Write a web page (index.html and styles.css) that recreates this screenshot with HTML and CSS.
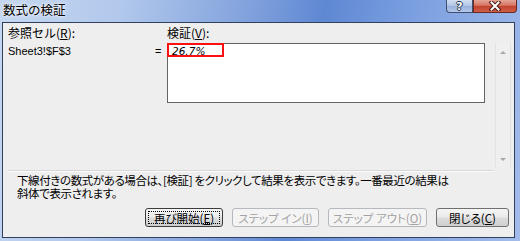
FILE: index.html
```html
<!DOCTYPE html>
<html lang="ja">
<head>
<meta charset="utf-8">
<title>数式の検証</title>
<link rel="stylesheet" href="styles.css">
</head>
<body>
<div class="window">
  <div class="titlebar">
    <div class="title">数式の検証</div>
    <div class="caption-btns">
      <div class="cap help"><span class="q">?</span></div>
      <div class="cap close">
        <svg width="14" height="10" viewBox="0 0 14 10"><path d="M3.5 1.5 L10.5 8.5 M10.5 1.5 L3.5 8.5" stroke="#4a1c14" stroke-width="4" stroke-linecap="square"/><path d="M3.5 1.5 L10.5 8.5 M10.5 1.5 L3.5 8.5" stroke="#ffffff" stroke-width="2" stroke-linecap="square"/></svg>
      </div>
    </div>
  </div>
  <div class="client">
    <div class="eval-grid">
      <div class="lbl ref">参照セル(<u>R</u>):</div>
      <div class="lbl evallbl">検証(<u>V</u>):</div>
      <div class="refval">Sheet3!$F$3</div>
      <div class="eq">=</div>
      <div class="evalbox"><span class="result">26.7%</span><span class="highlight"></span></div>
      <div class="vscroll">
        <span class="arrow up"></span>
        <span class="arrow down"></span>
      </div>
    </div>
    <div class="sep"></div>
    <p class="hint">下線付きの数式がある場合は、[検証] をクリックして結果を表示できます。一番最近の結果は<br>斜体で表示されます。</p>
    <div class="buttons">
      <div class="btn default w1"><span class="focus">再び開始(<u>E</u>)</span></div>
      <div class="btn disabled w2">ステップ イン(<u>I</u>)</div>
      <div class="btn disabled w3">ステップ アウト(<u>O</u>)</div>
      <div class="btn w4">閉じる(<u>C</u>)</div>
    </div>
  </div>
</div>
</body>
</html>
```

FILE: styles.css
```css
html, body {
  margin: 0;
  padding: 0;
}
body {
  font-family: "Noto Sans CJK JP", "Liberation Sans", sans-serif;
  font-size: 12px;
  color: #000;
}
.window {
  width: 520px;
  height: 241px;
  box-sizing: border-box;
  display: flex;
  flex-direction: column;
  background: linear-gradient(100deg, #c6d7f0 0%, #b1c8ec 22%, #87a6de 42%, #5f88d3 58%, #7b9fe0 74%, #a3bcea 100%);
}
.titlebar {
  height: 22px;
  display: flex;
  align-items: flex-start;
  flex: none;
}
.title {
  margin: 2px 0 0 3px;
  font-size: 12.5px;
  line-height: 16px;
  color: #000;
  text-shadow: 0 0 4px #ffffff, 0 0 2px #ffffff;
}
.caption-btns {
  margin-left: auto;
  margin-right: 3px;
  display: flex;
  height: 13px;
}
.cap {
  height: 13px;
  box-sizing: border-box;
  border: 1px solid #3e4e6c;
  border-top: none;
  display: flex;
  align-items: center;
  justify-content: center;
}
.help {
  width: 27px;
  border-radius: 0 0 0 4px;
  background: linear-gradient(#d2def2, #b0c4e6 50%, #98b1dc 51%, #b4c8ea);
}
.q {
  color: #fff;
  font-family: "DejaVu Sans", sans-serif;
  font-weight: bold;
  font-size: 11px;
  line-height: 11px;
  text-shadow: 1px 0 0 #27324a, -1px 0 0 #27324a, 0 1px 0 #27324a, 0 -1px 0 #27324a;
}
.close {
  width: 44px;
  border-left: 1px solid #6a2a22;
  border-color: #6a2a22;
  border-radius: 0 0 4px 0;
  background: linear-gradient(#e4a596, #d77563 45%, #c2412c 50%, #cf5e48);
}
.client {
  flex: 1;
  margin: 0 5px 3px 2px;
  border: 1px solid #30405e;
  background: #eeeeee;
  display: flex;
  flex-direction: column;
}
.eval-grid {
  display: grid;
  grid-template-columns: 144px 15px 318px 16px;
  grid-template-rows: 17px 60px 64px;
  padding: 3px 0 0 5px;
}
.lbl {
  line-height: 14px;
}
.ref { grid-column: 1 / 3; grid-row: 1; }
.evallbl { grid-column: 3; grid-row: 1; }
.refval {
  grid-column: 1; grid-row: 2;
  font-family: "Liberation Sans", sans-serif;
  font-size: 11px;
  line-height: 14px;
  padding-top: 1px;
}
.eq {
  grid-column: 2; grid-row: 2;
  font-family: "Liberation Sans", sans-serif;
  font-size: 11px;
  line-height: 14px;
  padding: 1px 0 0 3px;
}
.evalbox {
  grid-column: 3; grid-row: 2;
  position: relative;
  background: #fff;
  border: 1px solid #646464;
  box-sizing: border-box;
}
.result {
  display: block;
  margin: 1px 0 0 4px;
  font-family: "DejaVu Sans", sans-serif;
  font-style: italic;
  font-size: 10.5px;
  line-height: 12px;
}
.highlight {
  position: absolute;
  left: -1px;
  top: -1px;
  width: 57px;
  height: 14px;
  border: 2px solid #ff1010;
  box-sizing: border-box;
}
.vscroll {
  grid-column: 4; grid-row: 2 / 4;
  margin-left: 10px;
  width: 16px;
  box-sizing: border-box;
  border-left: 1px solid #e2e2e2;
  border-right: 1px solid #e2e2e2;
  background: #efefef;
  display: flex;
  flex-direction: column;
  justify-content: space-between;
  align-items: center;
  padding: 8px 0 6px;
}
.arrow {
  width: 0;
  height: 0;
  border-left: 3px solid transparent;
  border-right: 3px solid transparent;
}
.arrow.up { border-bottom: 3px solid #a8a8a8; }
.arrow.down { border-top: 3px solid #a8a8a8; }
.sep {
  margin: 3px 0 0 5px;
  width: 486px;
  height: 1px;
  background: #d7d7d7;
  border-bottom: 1px solid #fbfbfb;
}
.hint {
  margin: 2px 0 0 14px;
  line-height: 13px;
  font-size: 11.5px;
  letter-spacing: -0.4px;
  font-feature-settings: "palt";
}
.buttons {
  display: flex;
  justify-content: flex-end;
  gap: 9px;
  margin-top: auto;
  margin-bottom: 10px;
  padding-right: 5px;
}
.btn {
  height: 19px;
  box-sizing: border-box;
  border: 1px solid #707070;
  border-radius: 3px;
  background: linear-gradient(#f4f4f4, #ebebeb 48%, #dcdcdc 52%, #cfcfcf);
  display: flex;
  align-items: center;
  justify-content: center;
  line-height: 14px;
  font-size: 11.5px;
  font-feature-settings: "palt";
}
.btn.default {
  border-color: #3c3c3c;
  padding: 2px;
}
.btn.default .focus {
  flex: 1;
  align-self: stretch;
  display: flex;
  align-items: center;
  justify-content: center;
  border: 1px dotted #000;
}
.btn.disabled {
  border-color: #b5b8bc;
  background: #f4f4f4;
  color: #a3a3a3;
}
.w1 { width: 78px; }
.w2 { width: 87px; }
.w3 { width: 99px; }
.w4 { width: 73px; }
```
